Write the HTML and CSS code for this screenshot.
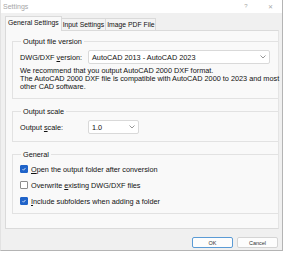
FILE: index.html
```html
<!DOCTYPE html>
<html lang="en">
<head>
  <meta charset="UTF-8">
  <meta name="viewport" content="width=device-width, initial-scale=1.0">
  <title>Settings</title>
  <link rel="stylesheet" href="styles.css">
</head>
<body>
  <div class="window">
    <div class="titlebar">
      <span class="title">Settings</span>
      <span class="title-buttons">
        <span class="tb-help">?</span>
        <span class="tb-close">&#x2715;</span>
      </span>
    </div>

    <div class="dialog">
      <div class="tabs">
        <div class="tab active">General Settings</div>
        <div class="tab">Input Settings</div>
        <div class="tab">Image PDF File</div>
      </div>

      <div class="panel">
        <fieldset class="group">
          <legend>Output file version</legend>
          <div class="row">
            <label class="row-label">DWG/DXF <u>v</u>ersion:</label>
            <div class="combo combo-wide">
              <span>AutoCAD 2013 - AutoCAD 2023</span>
              <svg class="chevron" viewBox="0 0 6 4" width="6" height="4"><path d="M0.5 0.5 L3 3 L5.5 0.5" fill="none" stroke="#8a8a8a" stroke-width="0.9"/></svg>
            </div>
          </div>
          <p class="note">We recommend that you output AutoCAD 2000 DXF format.<br>The AutoCAD 2000 DXF file is compatible with AutoCAD 2000 to 2023 and most<br>other CAD software.</p>
        </fieldset>

        <fieldset class="group">
          <legend>Output scale</legend>
          <div class="row">
            <label class="row-label">Output <u>s</u>cale:</label>
            <div class="combo combo-small">
              <span>1.0</span>
              <svg class="chevron" viewBox="0 0 6 4" width="6" height="4"><path d="M0.5 0.5 L3 3 L5.5 0.5" fill="none" stroke="#8a8a8a" stroke-width="0.9"/></svg>
            </div>
          </div>
        </fieldset>

        <fieldset class="group group-general">
          <legend>General</legend>
          <label class="check">
            <span class="box checked"><svg viewBox="0 0 8 8" width="8" height="8"><path d="M2 4.2 L3.4 5.6 L6 2.6" fill="none" stroke="#fff" stroke-width="1"/></svg></span>
            <span><u>O</u>pen the output folder after conversion</span>
          </label>
          <label class="check">
            <span class="box"></span>
            <span>Overwrite <u>e</u>xisting DWG/DXF files</span>
          </label>
          <label class="check">
            <span class="box checked"><svg viewBox="0 0 8 8" width="8" height="8"><path d="M2 4.2 L3.4 5.6 L6 2.6" fill="none" stroke="#fff" stroke-width="1"/></svg></span>
            <span><u>I</u>nclude subfolders when adding a folder</span>
          </label>
        </fieldset>
      </div>

      <div class="footer">
        <button class="btn btn-default">OK</button>
        <button class="btn">Cancel</button>
      </div>
    </div>
  </div>
</body>
</html>
```

FILE: styles.css
```css
/* Base */
html, body {
  margin: 0;
  padding: 0;
  background: #ffffff;
}

body {
  font-family: 'Liberation Sans', Arial, sans-serif;
  font-size: 7.3px;
  color: #111111;
  width: 284px;
  height: 253px;
  overflow: hidden;
}

/* Window frame */
.window {
  width: 283px;
  height: 251px;
  border-right: 1px solid #b4b4b4;
  border-bottom: 1px solid #b4b4b4;
  border-left: 1px solid #e2e2e2;
  box-sizing: border-box;
  display: flex;
  flex-direction: column;
  background: #f0f0f0;
}

.titlebar {
  height: 13px;
  background: #ffffff;
  display: flex;
  align-items: center;
  justify-content: space-between;
  padding: 0 0 0 2px;
}

.title {
  color: #a6a6a6;
  font-size: 7px;
}

.title-buttons {
  display: flex;
  color: #a8a8a8;
  font-size: 6px;
}

.tb-help {
  width: 24px;
  text-align: center;
}

.tb-close {
  width: 24px;
  text-align: center;
}

/* Dialog body */
.dialog {
  flex: 1;
  display: flex;
  flex-direction: column;
  padding: 4px 3px 0 4px;
}

/* Tabs */
.tabs {
  display: flex;
  align-items: flex-end;
  height: 13px;
  position: relative;
  z-index: 1;
  font-size: 6.8px;
}

.tab {
  height: 11px;
  line-height: 11px;
  padding: 0 1px;
  border: 1px solid #dadada;
  border-bottom: none;
  border-left: none;
  background: #f3f3f3;
  white-space: nowrap;
}

.tab.active {
  height: 14px;
  line-height: 12px;
  margin-bottom: -1px;
  border-left: 1px solid #dadada;
  background: #f9f9f9;
  padding: 0 2px;
}

/* Tab page */
.panel {
  height: 199px;
  background: #f9f9f9;
  border: 1px solid #dadada;
  border-right-color: #e4e4e4;
  box-sizing: border-box;
  padding: 6px 0 0 6px;
}

.group {
  margin: 0 0 8px 0;
  padding: 4px 2px 7px 7px;
  border: 1px solid #e2e2e2;
  border-right: none;
  min-width: 0;
}

.group legend {
  padding: 0 2px;
  margin-left: 1px;
  line-height: 9px;
}

.group-general {
  margin-bottom: 0;
  padding-top: 2px;
  padding-bottom: 4px;
}

.row {
  display: flex;
  align-items: center;
}

.row-label {
  width: 68px;
}

.combo {
  height: 14px;
  box-sizing: border-box;
  background: #ffffff;
  border: 1px solid #d9d9d9;
  border-radius: 2px;
  display: flex;
  align-items: center;
  justify-content: space-between;
  padding: 0 3px;
}

.combo-wide {
  width: 182px;
}

.combo-small {
  width: 51px;
}

.chevron {
  display: block;
}

.note {
  margin: 3px 0 0 0;
  line-height: 8px;
  white-space: nowrap;
}

/* Check boxes */
.check {
  display: flex;
  align-items: center;
  height: 16px;
  gap: 3px;
}

.box {
  width: 6px;
  height: 6px;
  border: 1px solid #8c8c8c;
  border-radius: 1px;
  background: #ffffff;
  display: flex;
  align-items: center;
  justify-content: center;
  overflow: hidden;
}

.box.checked {
  background: #1f63c9;
  border-color: #1f63c9;
}

/* Footer buttons */
.footer {
  display: flex;
  justify-content: flex-end;
  gap: 4px;
  padding: 8px 1px 0 0;
}

.btn {
  width: 41px;
  height: 11px;
  padding: 0;
  font-family: inherit;
  font-size: 5.5px;
  color: #333333;
  background: #fdfdfd;
  border: 1px solid #d4d4d4;
  border-radius: 2px;
}

.btn-default {
  border-color: #5b9bd5;
}
```
